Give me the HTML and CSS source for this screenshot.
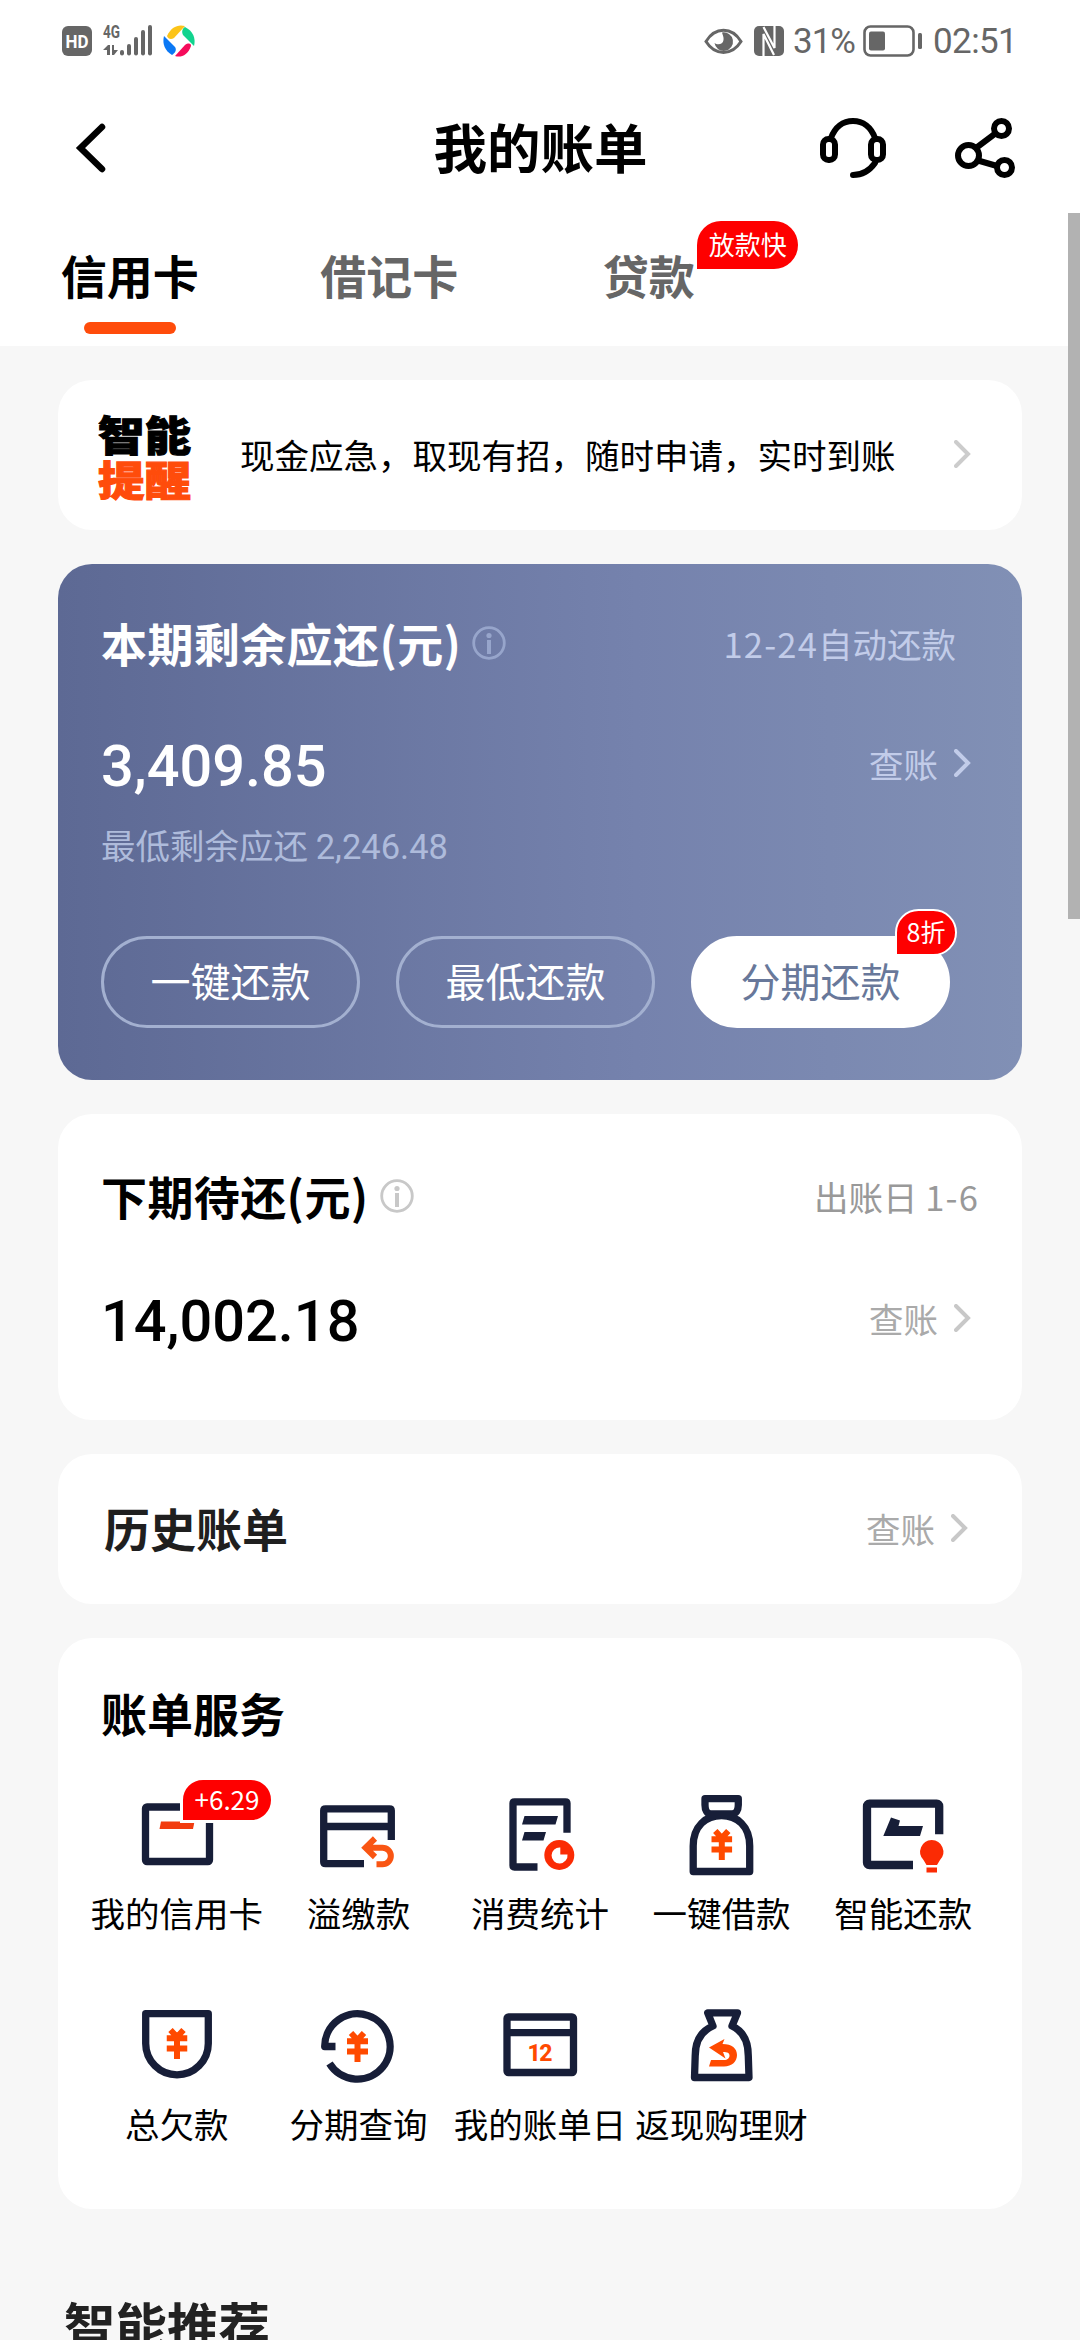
FILE: index.html
```html
<!DOCTYPE html>
<html lang="zh-CN">
<head>
<meta charset="utf-8">
<title>我的账单</title>
<link rel="stylesheet" href="styles.css">
</head>
<body>
<svg class="defs" aria-hidden="true">
  <symbol id="yen" viewBox="0 0 21 31"><path d="M4 2 10.5 9 17 2M0 10.2H21M0 20.6H21M10.5 8V31" fill="none" stroke="#ff4a00" stroke-width="6"/></symbol>
  <symbol id="chevron" viewBox="0 0 17 28"><path d="M2 2 14 14 2 26" fill="none" stroke="currentColor" stroke-width="4" stroke-linecap="round"/></symbol>
  <symbol id="info" viewBox="0 0 34 34"><circle cx="17" cy="17" r="15.3" fill="none" stroke="currentColor" stroke-width="2.8"/><circle cx="17" cy="9.5" r="2.6" fill="currentColor"/><path d="M17 14V28" stroke="currentColor" stroke-width="4"/></symbol>
</svg>
<div class="screen">
  <header class="status">
    <div class="status-left">
      <svg class="hd" width="30" height="30" viewBox="0 0 30 30"><rect width="30" height="30" rx="6" fill="#666"/><text x="15" y="22" text-anchor="middle" textLength="23" lengthAdjust="spacingAndGlyphs" font-size="18" font-weight="700" fill="#fff">HD</text></svg>
      <svg class="signal" width="50" height="34" viewBox="0 0 50 34" fill="#666"><text x="0" y="14" font-size="18" font-weight="700" textLength="17" lengthAdjust="spacingAndGlyphs">4G</text><path d="M0 26 5 21H7V31H4V26ZM9 21H11V26H15L11 31H9Z"/><rect x="17" y="26" width="4" height="5.500" rx="2"/><rect x="24" y="20" width="4" height="11.500" rx="2"/><rect x="31" y="13" width="4" height="18.500" rx="2"/><rect x="38" y="6" width="4" height="25.500" rx="2"/><rect x="45" y="1" width="4" height="30.500" rx="2"/></svg>
      <svg width="32" height="32" viewBox="0 0 32 32"><path d="M4 11C8 2 15-1 22 1L11 13C8 15 5 14 4 11Z" fill="#fcc419"/><path d="M22 2C30 6 33 13 31 21L20 10C18 6 20 3 22 2Z" fill="#12d38e"/><path d="M28 21C25 30 18 33 12 31L22 20C25 18 28 18 28 21Z" fill="#f50c5b"/><path d="M1 11C-1 19 2 26 9 30C12 28 14 25 12 22Z" fill="#0a78f5"/></svg>
    </div>
    <div class="status-right">
      <svg width="39" height="27" viewBox="0 0 39 27"><path d="M2 13.500C11-1.500 28-1.500 37 13.500C28 28 11 28 2 13.500Z" fill="none" stroke="#666" stroke-width="3"/><path d="M18 4.500A9.300 9.300 0 1 1 10.500 15C13 17 19 17 19.500 12C20 9 18.500 7 18 4.500Z" fill="#666"/></svg>
      <svg class="nfc" width="30" height="30" viewBox="0 0 30 30"><rect width="30" height="30" rx="5" fill="#666"/><path d="M9.500 31V8L20 29M20.500-1V22L9.500 1" fill="none" stroke="#fff" stroke-width="2.200"/></svg>
      <span class="pct">31%</span>
      <svg class="battery" width="59" height="32" viewBox="0 0 59 32"><rect x="1.500" y="1.500" width="49" height="29" rx="6" fill="none" stroke="#666" stroke-width="2.600"/><rect x="6" y="6.500" width="16" height="19" rx="2" fill="#666"/><rect x="55" y="8" width="4" height="16" rx="1.500" fill="#666"/></svg>
      <span class="clock">02:51</span>
    </div>
  </header>

  <nav class="titlebar">
    <svg width="34" height="50" viewBox="0 0 34 50"><path d="M26 4 4.500 25 26 46" fill="none" stroke="#000" stroke-width="6.500" stroke-linecap="round"/></svg>
    <h1>我的账单</h1>
    <div class="actions">
      <svg width="66" height="60" viewBox="0 0 66 60" fill="none" stroke="#000" stroke-width="6"><path d="M11 20C15 9 23 3 33 3S51 9 55 20M55 45C50 52 43 57 33 57" stroke-linecap="round"/><rect x="3" y="21" width="12" height="21" rx="5.500"/><rect x="51" y="21" width="12" height="21" rx="5.500"/></svg>
      <svg width="60" height="60" viewBox="0 0 60 60" fill="none" stroke="#000" stroke-width="6"><circle cx="13.500" cy="37.500" r="10.500"/><circle cx="46.500" cy="10.500" r="7.500"/><circle cx="49.500" cy="49.500" r="7.500"/><path d="M21 30 41 15M23 42.500 42 48"/></svg>
    </div>
  </nav>

  <div class="tabs">
    <div class="tab active"><span>信用卡</span></div>
    <div class="tab"><span>借记卡</span></div>
    <div class="tab"><span>贷款<em class="badge tab-badge">放款快</em></span></div>
  </div>

  <main>
    <section class="card notice">
      <div class="notice-logo"><span>智能</span><span class="orange">提醒</span></div>
      <p>现金应急，取现有招，随时申请，实时到账</p>
      <svg class="chev"><use href="#chevron"/></svg>
    </section>

    <section class="card current">
      <div class="row head"><h2>本期剩余应还(元)</h2><svg class="info"><use href="#info"/></svg><span class="side auto"><span><span class="num">12-24</span>自动还款</span></span></div>
      <div class="row amount"><strong>3,409.85</strong><a class="side">查账<svg class="chev"><use href="#chevron"/></svg></a></div>
      <p class="minimum">最低剩余应还 <span>2,246.48</span></p>
      <div class="buttons">
        <button>一键还款</button>
        <button>最低还款</button>
        <button class="primary">分期还款<em class="badge off-badge">8折</em></button>
      </div>
    </section>

    <section class="card next">
      <div class="row head"><h2>下期待还(元)</h2><svg class="info"><use href="#info"/></svg><span class="side date"><span>出账日 <span class="num">1-6</span></span></span></div>
      <div class="row amount"><strong>14,002.18</strong><a class="side">查账<svg class="chev"><use href="#chevron"/></svg></a></div>
    </section>

    <section class="card history">
      <h2>历史账单</h2><a class="side">查账<svg class="chev"><use href="#chevron"/></svg></a>
    </section>

    <section class="card services">
      <h2>账单服务</h2>
      <div class="grid">
        <div class="item">
          <svg viewBox="0 0 96 96"><rect class="ink" x="16.500" y="20" width="64" height="54.500" rx="1.500"/><path d="M32 34.500H65.500L64 42H30.500Z" fill="#f23c0f"/></svg>
          <em class="badge gain-badge">+6.29</em><span>我的信用卡</span>
        </div>
        <div class="item">
          <svg viewBox="0 0 96 96"><path class="ink" d="M54 76.700H15.500Q13.700 76.700 13.700 75V23.500Q13.700 21.800 15.500 21.800H79.500Q81.300 21.800 81.300 23.500V53M14 39.500H81"/><path d="M56 60.700H72.500A8.300 8.200 0 0 1 72.500 77.200H66.500M65 51.500 55.500 60.700 65 70" fill="none" stroke="#f95513" stroke-width="6"/></svg>
          <span>溢缴款</span>
        </div>
        <div class="item">
          <svg viewBox="0 0 96 96"><path class="ink" d="M45.500 80H22.500Q21 80 21 78.500V16.300Q21 14.800 22.500 14.800H73.500Q75 14.800 75 16.300V45.700"/><path d="M32.500 29H66L63.500 37.500H30ZM32.500 45H54L51.500 53.500H30Z" fill="#171e38"/><circle cx="67.300" cy="68" r="15" fill="#fb2b04"/><path d="M68.300 60.500V67.500H75.500A8 8 0 1 1 68.300 60.500Z" fill="#fff"/></svg>
          <span>消费统计</span>
        </div>
        <div class="item">
          <svg viewBox="0 0 96 96"><path class="ink" d="M31 11.700H64.300V18C64.300 23 62 27 58 27H37C33 27 31 23 31 18ZM19.200 84.500V59C19.200 39 32 28.500 47.500 28.500S75.700 39 75.700 59V84.500Z"/><use href="#yen" x="37.300" y="42" width="21" height="31"/></svg>
          <span>一键借款</span>
        </div>
        <div class="item">
          <svg viewBox="0 0 96 96"><path class="ink thick" d="M58 78H14.500Q12 78 12 75.500V19.200Q12 16.700 14.500 16.700H81.700Q84.200 16.700 84.200 19.200V47.300"/><path d="M36 30.500 45 33.500 43.500 39H68L65 49H28.300Z" fill="#171e38"/><path d="M76.700 53A11.800 11.800 0 0 1 85 73L82 78H71.500L68.500 73A11.800 11.800 0 0 1 76.700 53ZM71.500 80.500H82V85.500H71.500Z" fill="#fb2b04"/></svg>
          <span>智能还款</span>
        </div>
        <div class="item">
          <svg viewBox="0 0 96 96"><path class="ink" d="M16.700 15.700H79.300V45.500A31.300 31.300 0 0 1 16.700 45.500Z"/><use href="#yen" x="37.500" y="30" width="21" height="31"/></svg>
          <span>总欠款</span>
        </div>
        <div class="item">
          <svg viewBox="0 0 96 96"><path class="ink" d="M25.500 48.500H14.700A32.700 32.700 0 1 1 19.500 65.500"/><use href="#yen" x="37" y="33" width="21" height="31"/></svg>
          <span>分期查询</span>
        </div>
        <div class="item">
          <svg viewBox="0 0 96 96"><rect class="ink" x="15" y="19" width="66.500" height="55.500" rx="1.500"/><path class="ink" d="M15 34.700H81"/><text x="48" y="62.500" text-anchor="middle" font-size="23" font-weight="800" textLength="25" fill="#ff4a00">12</text></svg>
          <span>我的账单日</span>
        </div>
        <div class="item">
          <svg viewBox="0 0 96 96"><path class="ink" d="M33.700 14.800H63.500L58 28C69 33 74.300 43 74.300 58L75 79.500H20.500L21.200 58C21.200 43 27 33 39 28Z"/><path d="M35 49.500 50.500 41 48.500 46C58 46 63 50.500 63 57S58 68.500 50 68.500H35L37 62H50C53.500 62 55.500 60 55.500 57.500S53.500 54 49 54L51.500 60.500Z" fill="#ff4a00"/></svg>
          <span>返现购理财</span>
        </div>
      </div>
    </section>

    <h2 class="recommend">智能推荐</h2>
  </main>
  <div class="scrollbar"></div>
</div>
</body>
</html>
```
FILE: styles.css
```css
* { box-sizing: border-box; margin: 0; padding: 0; }
body { background: #f7f7f7; }
.defs { display: none; }
svg { display: block; flex: none; overflow: visible; }
.screen {
  position: relative;
  width: 1080px;
  height: 2340px;
  overflow: hidden;
  background: #f7f7f7;
  color: #000;
  font-family: "Noto Sans CJK SC", "Noto Sans", sans-serif;
  font-size: 34.5px;
}
em { font-style: normal; }
a, p, span { white-space: nowrap; }

.status {
  display: flex;
  justify-content: space-between;
  align-items: center;
  height: 82px;
  padding: 0 64px 0 62px;
  background: #fff;
  color: #666;
  font-family: Roboto, sans-serif;
}
.status-left, .status-right { display: flex; align-items: center; }
.signal { margin: 0 10px 0 11px; }
.status-right { font-size: 35px; }
.nfc { margin: 0 9px 0 11px; overflow: hidden; }
.pct { width: 65px; letter-spacing: -1px; }
.battery { margin: 0 11px 0 5px; }
.clock { width: 83px; letter-spacing: -.6px; }

.titlebar {
  display: grid;
  grid-template-columns: 200px 1fr 200px;
  align-items: center;
  height: 131px;
  padding: 0 65px 0 76px;
  background: #fff;
}
.titlebar h1 { padding: 0 10px 3px 0; text-align: center; font-size: 53.500px; line-height: 78px; }
.actions { display: flex; justify-content: flex-end; gap: 69px; }

.tabs {
  display: flex;
  height: 133px;
  padding-top: 28px;
  background: #fff;
}
.tab {
  display: flex;
  flex-direction: column;
  align-items: center;
  gap: 14px;
  width: 259.500px;
  color: #666;
  font-size: 46px;
  font-weight: 700;
  line-height: 67px;
}
.tab span { position: relative; }
.tab.active { color: #000; }
.tab.active::after { content: ""; width: 92px; height: 12px; border-radius: 6px; background: #ff4c0b; }

.badge { position: absolute; background: #fe0000; color: #fff; font-weight: 400; text-align: center; white-space: nowrap; }
.tab-badge { left: 94.500px; top: -20px; width: 101px; height: 48px; border-radius: 24px 24px 24px 0; font-size: 26px; line-height: 46px; }
.off-badge { left: 201px; top: -30px; width: 62px; height: 47px; border: 2px solid #fff; border-radius: 24px 24px 24px 0; font-size: 25px; line-height: 41px; }
.gain-badge { left: 94px; top: -10px; width: 94px; height: 46px; border: 3px solid #fff; border-radius: 23px 23px 23px 0; font-size: 26px; line-height: 38px; }

main { display: flex; flex-direction: column; gap: 34px; padding: 34px 58px 0; }
.card { border-radius: 34px; background: #fff; }
.card h2 { font-size: 46px; line-height: 60px; white-space: nowrap; }
.chev { width: 17px; height: 28px; }
.info { width: 34px; height: 34px; }

.notice { display: flex; align-items: center; height: 150px; padding: 0 51px 3px 40px; }
.notice-logo { display: flex; flex-direction: column; width: 142px; padding-top: 2px; }
.notice-logo span { font-size: 46.500px; font-weight: 900; line-height: 45px; transform: scaleY(.88); -webkit-text-stroke: 1.200px currentColor; }
.orange { color: #ff4c0b; }
.notice .chev { margin-left: auto; color: #ccc; }

.row { display: flex; align-items: center; }
.side { display: flex; align-items: center; gap: 16px; margin-left: auto; line-height: 50px; }
.num { letter-spacing: 1.200px; }
.head { height: 86px; }
.head h2 { padding-bottom: 3px; letter-spacing: .4px; }
.head .info { margin-left: 11px; }
.amount { height: 70px; }
.amount strong { padding-top: 2px; font-family: Roboto, sans-serif; font-size: 57.700px; font-weight: 500; }
.amount .side { padding-bottom: 4px; }

.current {
  height: 516px;
  padding: 36px 51px 0 43px;
  background: linear-gradient(90deg, #5d6994, #7582ad 60%, #8190b5);
  color: #fff;
}
.current .side, .current .minimum { color: #c2cce9; }
.current .info { color: #97a5cb; }
.current .auto { margin-right: 15px; }
.current .amount { margin-top: 44px; }
.current .minimum { margin-top: 20px; line-height: 48px; color: #aebbdb; }
.minimum span { font-family: Roboto, sans-serif; }
.buttons { display: flex; gap: 36px; margin-top: 65px; }
.buttons button {
  position: relative;
  width: 259px;
  height: 92px;
  padding-bottom: 5px;
  border: 3px solid #a3b0d0;
  border-radius: 46px;
  background: none;
  color: #fff;
  font: 40px/80px "Noto Sans CJK SC", sans-serif;
}
.buttons .primary { border-color: #fff; background: #fff; color: #68789a; }

.next { height: 306px; padding: 39px 51px 0 43px; }
.next .side, .history .side { color: #aaa; }
.next .date { margin-right: -8px; color: #999; }
.next .info, .next .chev, .history .chev { color: #c8c8c8; }
.next .amount { margin-top: 46px; }

.history { display: flex; align-items: center; height: 150px; padding: 0 54px 3px 46px; }
.history h2 { padding-bottom: 1px; color: #1f1f1f; }

.services { height: 571px; padding: 44px 28px 0; }
.services h2 { padding-left: 15px; }
.grid { display: grid; grid-template-columns: repeat(5, 181.600px); row-gap: 62px; margin-top: 45px; }
.item { position: relative; display: flex; flex-direction: column; align-items: center; gap: 5px; line-height: 48px; }
.item svg { width: 96px; height: 96px; }
.ink { fill: none; stroke: #171e38; stroke-width: 7.300px; stroke-linejoin: round; }
.thick { stroke-width: 8.300px; }
.item text { font-family: Roboto, sans-serif; }

.recommend { margin-top: 43px; padding-left: 6px; color: #222; font-size: 51.500px; line-height: 76px; }
.scrollbar { position: absolute; top: 213px; right: 0; width: 12px; height: 706px; background: #b2b2b2; }
```
